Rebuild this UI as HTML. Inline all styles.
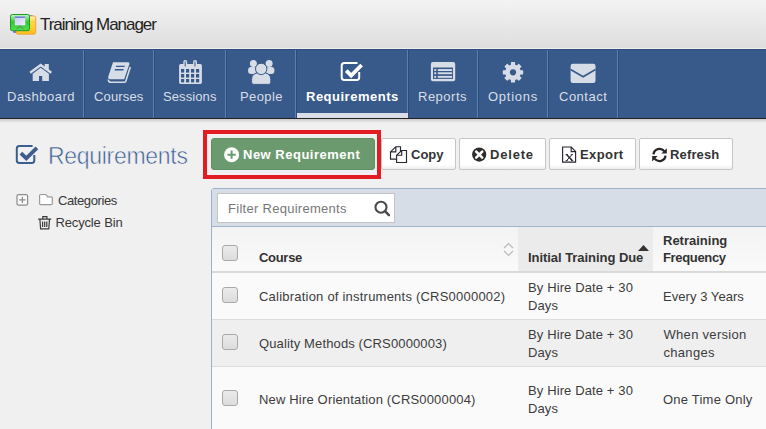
<!DOCTYPE html>
<html><head><meta charset="utf-8">
<style>
*{margin:0;padding:0;box-sizing:border-box}
html,body{width:766px;height:429px;overflow:hidden}
body{font-family:"Liberation Sans",sans-serif;background:#f0f0f0;position:relative;color:#333}
.abs{position:absolute}
#hdr{left:0;top:0;width:766px;height:49px;background:linear-gradient(#f3f3f3,#dedede);border-bottom:1px solid #f0eeec}
#title{left:40px;top:15px;font-size:17px;color:#222;letter-spacing:-1.05px}
#nav{left:0;top:49px;width:766px;height:69px;background:#385a8a;border-top:1px solid #2d4d7d}
#navline{left:0;top:118px;width:766px;height:1px;background:#222}
#shadow{left:0;top:119px;width:766px;height:4px;background:linear-gradient(#cacaca,#f0f0f0)}
.sep{top:50px;width:2px;height:68px;background:linear-gradient(90deg,#5a80b2 50%,#2e4c78 50%)}
.nl{top:89px;font-size:13px;color:#d8dee7;white-space:nowrap}
.ni{fill:#d6dce6}
#active{left:297px;top:113px;width:111px;height:5px;background:#d8dde6}

#ptitle{left:48px;top:142.5px;font-size:23px;color:#3a5c94;-webkit-text-stroke:0.55px #f0f0f0;paint-order:normal;white-space:nowrap;letter-spacing:-0.3px}
#redbox{left:203px;top:130px;width:178px;height:49px;border:4px solid #e31b23}
#newbtn{left:211px;top:138px;width:164px;height:32px;background:#6b9a6e;border:1px solid #5f8f62;border-radius:3px}
.btn{top:138px;height:32px;background:linear-gradient(#fff 86%,#eeeeee);border:1px solid #c6c6c6;border-radius:2px}
.bt{top:147px;font-size:13px;font-weight:bold;color:#333;white-space:nowrap}
.tree{font-size:13px;color:#383838;white-space:nowrap}
#panel{left:211px;top:188px;width:600px;height:260px;border:1px solid #9db2c8;border-radius:3px 0 0 0;background:#fafafa}
#tbar{left:212px;top:189px;width:560px;height:38px;background:#d6dde7;border-bottom:1px solid #9fb4c9}
#filter{left:217px;top:193px;width:178px;height:30px;background:#fff;border:1px solid #c4c4c4}
#ftxt{left:228px;top:201px;font-size:13px;color:#777;white-space:nowrap;letter-spacing:0.28px}
#thead{left:212px;top:227px;width:560px;height:46px;background:linear-gradient(#f3f3f3,#fafafa);border-bottom:2px solid #d9d9d9}
#sortcol{left:518px;top:227px;width:135px;height:44px;background:#ebebeb}
.th{font-size:13px;font-weight:bold;color:#333;white-space:nowrap;line-height:17px;letter-spacing:0.3px}
.td{font-size:13px;color:#3c3c3c;white-space:nowrap;line-height:18px;letter-spacing:0.22px}
.cb{left:222px;width:16px;height:16px;border:1px solid #a9a9a9;border-radius:3px;background:linear-gradient(#ebebeb,#dcdcdc)}
.row{left:212px;width:560px}
</style></head><body>
<div id="hdr" class="abs"></div>
<svg class="abs" style="left:6px;top:10px" width="34" height="28" viewBox="6 10 34 28">
<defs>
<linearGradient id="gy" x1="0" y1="0" x2="0" y2="1"><stop offset="0" stop-color="#fff6c0"/><stop offset="0.3" stop-color="#ffd84a"/><stop offset="1" stop-color="#ffbf1a"/></linearGradient>
<linearGradient id="gg" x1="0" y1="0" x2="0" y2="1"><stop offset="0" stop-color="#c8f8c8"/><stop offset="0.45" stop-color="#34c634"/><stop offset="1" stop-color="#4ee04e"/></linearGradient>
<linearGradient id="gs" x1="0" y1="0" x2="1" y2="1"><stop offset="0" stop-color="#c8c8ff"/><stop offset="1" stop-color="#f0f0ff"/></linearGradient>
</defs>
<rect x="13" y="15" width="20" height="18" rx="1.5" fill="#7474e0"/>
<rect x="16.3" y="16" width="19.4" height="18.2" rx="1.8" fill="url(#gy)" stroke="#f2a43a" stroke-width="1"/>
<rect x="10.5" y="14.5" width="19" height="16.2" rx="1.8" fill="url(#gg)" stroke="#1f9a1f" stroke-width="1"/>
<rect x="14.8" y="16.5" width="10.5" height="8.8" fill="url(#gs)"/>
<rect x="14.8" y="16.5" width="10.5" height="1.4" fill="#6478d8"/>
<path d="M20 25.3v1.2L16.5 28.6M20 26.5l3.5 2.1" fill="none" stroke="#6a7a6a" stroke-width="0.9"/>
</svg>
<div id="title" class="abs">Training Manager</div>
<div id="nav" class="abs"></div>
<div id="navline" class="abs"></div>
<div id="shadow" class="abs"></div>
<div class="abs sep" style="left:83px"></div>
<div class="abs sep" style="left:153px"></div>
<div class="abs sep" style="left:225px"></div>
<div class="abs sep" style="left:295px"></div>
<div class="abs sep" style="left:407px"></div>
<div class="abs sep" style="left:477px"></div>
<div class="abs sep" style="left:547px"></div>
<div class="abs sep" style="left:617px"></div>
<div id="active" class="abs"></div>
<svg class="abs" style="left:0;top:49px" width="766" height="69" viewBox="0 49 766 69">
<g fill="#d7dde7">
 <path d="M30.1 72.8L40.7 65.1L51.3 72.8" fill="none" stroke="#d7dde7" stroke-width="2.4"/>
 <rect x="44.7" y="64" width="4.1" height="5.8"/>
 <path d="M32.7 81V73.8L40.7 67.8L48.9 73.8V81H42.2V76H39V81Z"/>
 <path d="M113 62.2H128.2Q129.8 62.4 129.3 64.2L124.2 79.2H110.2Q107.6 79.2 108.3 76.6Z"/>
 <path d="M130.3 67L125.8 81.2Q125.4 82.3 124.2 82.3H111Q108.3 82.3 108.4 79.6" fill="none" stroke="#d7dde7" stroke-width="1.6"/>
 <rect x="179.1" y="64" width="22.8" height="19.9" rx="1.6"/>
 <rect x="183.3" y="60.1" width="3.9" height="6.7" rx="1.9"/>
 <rect x="193.1" y="60.1" width="3.9" height="6.7" rx="1.9"/>
 <circle cx="253.4" cy="63.6" r="3.5"/>
 <circle cx="269.1" cy="63.6" r="3.5"/>
 <rect x="248.1" y="67.1" width="8.5" height="6.9" rx="3"/>
 <rect x="265.9" y="67.1" width="8.5" height="6.9" rx="3"/>
 <path d="M251.6 82.2V79.2Q251.6 72.4 261.2 72.4Q270.8 72.4 270.8 79.2V82.2Q270.8 84.4 268.6 84.4H253.8Q251.6 84.4 251.6 82.2Z" stroke="#385a8a" stroke-width="1"/>
 <circle cx="261.2" cy="68.9" r="5.7" stroke="#385a8a" stroke-width="1"/>
 <rect x="430.9" y="62" width="24.3" height="19.2" rx="2"/>
 <rect x="570.6" y="63.7" width="24.9" height="19.3" rx="2.2"/>
</g>
<g fill="#385a8a">
 <rect x="116" y="65.7" width="8.8" height="1.3" transform="skewX(-18) translate(21.5 0)"/>
 <rect x="114.8" y="69.1" width="8.8" height="1.3" transform="skewX(-18) translate(22.6 0)"/>
 <rect x="184.7" y="61.5" width="1" height="5"/>
 <rect x="194.5" y="61.5" width="1" height="5"/>
 <rect x="181" y="69" width="3.2" height="3.6"/><rect x="186" y="69" width="3.2" height="3.6"/><rect x="191" y="69" width="3.2" height="3.6"/><rect x="196" y="69" width="3.2" height="3.6"/>
 <rect x="181" y="74" width="3.2" height="3.6"/><rect x="186" y="74" width="3.2" height="3.6"/><rect x="191" y="74" width="3.2" height="3.6"/><rect x="196" y="74" width="3.2" height="3.6"/>
 <rect x="181" y="79" width="3.2" height="3.4"/><rect x="186" y="79" width="3.2" height="3.4"/><rect x="191" y="79" width="3.2" height="3.4"/><rect x="196" y="79" width="3.2" height="3.4"/>
 <rect x="433" y="67.5" width="20" height="11.4"/>
 <path d="M570.6 69.5L583.1 76.8L595.5 69.5" fill="none" stroke="#385a8a" stroke-width="1.6"/>
</g>
<g fill="#d7dde7">
 <rect x="434.2" y="69.1" width="2" height="1.9"/><rect x="437.8" y="69.1" width="14.3" height="1.9"/>
 <rect x="434.2" y="72.3" width="2" height="1.9"/><rect x="437.8" y="72.3" width="14.3" height="1.9"/>
 <rect x="434.2" y="75.9" width="2" height="1.9"/><rect x="437.8" y="75.9" width="14.3" height="1.9"/>
</g>
<g fill="#d7dde7"><rect x="510.9" y="62.099999999999994" width="4.2" height="10.2" rx="0.6" transform="rotate(0 513 72.3)"/><rect x="510.9" y="62.099999999999994" width="4.2" height="10.2" rx="0.6" transform="rotate(45 513 72.3)"/><rect x="510.9" y="62.099999999999994" width="4.2" height="10.2" rx="0.6" transform="rotate(90 513 72.3)"/><rect x="510.9" y="62.099999999999994" width="4.2" height="10.2" rx="0.6" transform="rotate(135 513 72.3)"/><rect x="510.9" y="62.099999999999994" width="4.2" height="10.2" rx="0.6" transform="rotate(180 513 72.3)"/><rect x="510.9" y="62.099999999999994" width="4.2" height="10.2" rx="0.6" transform="rotate(225 513 72.3)"/><rect x="510.9" y="62.099999999999994" width="4.2" height="10.2" rx="0.6" transform="rotate(270 513 72.3)"/><rect x="510.9" y="62.099999999999994" width="4.2" height="10.2" rx="0.6" transform="rotate(315 513 72.3)"/><circle cx="513" cy="72.3" r="7.9"/></g><circle cx="513" cy="72.3" r="3.1" fill="#385a8a"/>
<path d="M357.5 63H344.2Q341.7 63 341.7 65.5V77.6Q341.7 80 344.2 80H356.8Q359.2 80 359.2 77.6V72" fill="none" stroke="#fff" stroke-width="2"/>
<path d="M346.3 70.6L351.2 75.5L361.6 65" fill="none" stroke="#fff" stroke-width="3.8"/>
</svg>

<div class="abs nl" style="left:7px;letter-spacing:0.5px">Dashboard</div>
<div class="abs nl" style="left:94px;letter-spacing:0.15px">Courses</div>
<div class="abs nl" style="left:163px;letter-spacing:0.1px">Sessions</div>
<div class="abs nl" style="left:240px;letter-spacing:0.4px">People</div>
<div class="abs nl" style="left:306px;color:#fff;font-weight:bold;letter-spacing:0.5px">Requirements</div>
<div class="abs nl" style="left:418px;letter-spacing:0.5px">Reports</div>
<div class="abs nl" style="left:488px;letter-spacing:0.75px">Options</div>
<div class="abs nl" style="left:559px;letter-spacing:0.5px">Contact</div>

<svg class="abs" style="left:12px;top:140px" width="30" height="30" viewBox="12 140 30 30"><g transform="translate(-324.9 82.9)">
<path d="M357.5 63H344.2Q341.7 63 341.7 65.5V77.6Q341.7 80 344.2 80H356.8Q359.2 80 359.2 77.6V72" fill="none" stroke="#3b5e8f" stroke-width="2"/>
<path d="M345.8 70.2L351.2 75.5L361.8 65" fill="none" stroke="#3b5e8f" stroke-width="3.8"/></g>
</svg>
<div id="ptitle" class="abs">Requirements</div>
<div id="redbox" class="abs"></div>
<div id="newbtn" class="abs"></div>
<svg class="abs" style="left:215px;top:140px" width="30" height="28" viewBox="215 140 30 28"><circle cx="231.6" cy="154.7" r="7.5" fill="#fff"/><path d="M231.6 150.6v8.2M227.5 154.7h8.2" stroke="#6b9a6e" stroke-width="2"/></svg>
<div class="abs bt" style="left:243px;color:#fff;letter-spacing:0.5px">New Requirement</div>
<div class="abs btn" style="left:381px;width:75px"></div>
<div class="abs btn" style="left:459px;width:87px"></div>
<div class="abs btn" style="left:549px;width:87px"></div>
<div class="abs btn" style="left:639px;width:94px"></div>
<svg class="abs" style="left:385px;top:140px" width="30" height="28" viewBox="385 140 30 28" fill="none" stroke="#262630" stroke-width="1.15">
<path d="M390.5 151.8L395.8 146.7H400.5V152.2M390.5 151.8V159.1H396.6M395.8 146.7V151.8H390.5"/>
<path d="M396.6 155.2L401.7 150.5H406.5V162.5H396.6ZM401.7 150.5V155.2H396.6" fill="#fff"/>
</svg>
<div class="abs bt" style="left:411px">Copy</div>
<svg class="abs" style="left:466px;top:143px" width="24" height="24" viewBox="466 143 24 24"><circle cx="479.2" cy="154.6" r="7.1" fill="#2e2e2e"/><path d="M476.2 151.6l6 6M482.2 151.6l-6 6" stroke="#fff" stroke-width="2.6" stroke-linecap="round"/></svg>
<div class="abs bt" style="left:490px;letter-spacing:0.8px">Delete</div>
<svg class="abs" style="left:555px;top:140px" width="30" height="28" viewBox="555 140 30 28" fill="none" stroke="#262630" stroke-width="1.15">
<path d="M562.6 147H571.2L575.6 151.4V162.1H562.6Z" fill="#fff"/><path d="M571.2 147V151.6H575.6"/>
<path d="M566.6 154.6L572.2 160.6" stroke-width="1.5"/><path d="M572 154.6L566.6 160.6" stroke-width="1"/>
<path d="M565.6 154.6H567.9M570.8 154.6H573M565.6 160.6H567.8M571 160.6H573.2" stroke-width="0.9"/>
</svg>
<div class="abs bt" style="left:580px;letter-spacing:0.4px">Export</div>
<svg class="abs" style="left:645px;top:140px" width="30" height="28" viewBox="645 140 30 28">
<path d="M653.5 154.3A6 6 0 0 1 664.3 151.3" fill="none" stroke="#262626" stroke-width="2.3"/><path d="M666.8 148.2V153.6H661.4z" fill="#262626"/>
<path d="M665.5 155.6A6 6 0 0 1 654.7 158.6" fill="none" stroke="#262626" stroke-width="2.3"/><path d="M652.2 161.6V156.1H657.6z" fill="#262626"/>
</svg>
<div class="abs bt" style="left:670px;letter-spacing:0.15px">Refresh</div>



<svg class="abs" style="left:10px;top:188px" width="50" height="46" viewBox="10 188 50 46" fill="none">
<rect x="17" y="194.7" width="10.6" height="10.4" rx="1.6" fill="#f8f8f8" stroke="#8c8c8c" stroke-width="1.2"/>
<path d="M19.2 199.9H25.5M22.35 196.8V203.1" stroke="#8a8a8a" stroke-width="1.2"/>
<path d="M40.6 194.5H45.2Q46 194.5 46.5 195.2L47.6 196.9H51.2Q52.3 196.9 52.3 198V203.6Q52.3 204.6 51.3 204.6H40.6Q39.6 204.6 39.6 203.6V195.5Q39.6 194.5 40.6 194.5Z" fill="#fff" stroke="#9a9a9a" stroke-width="1.2"/>
<path d="M38.2 219.2H51.2M42.8 219V216.7H46.9V219M39.9 219.3L40.6 228.9H48.8L49.5 219.3M42.6 221.5V227M44.7 221.5V227M46.8 221.5V227" stroke="#3a3a3a" stroke-width="1.2"/>
</svg>
<div class="abs tree" style="left:58px;top:193px;letter-spacing:-0.4px">Categories</div>

<div class="abs tree" style="left:55.5px;top:215px;letter-spacing:-0.15px">Recycle Bin</div>

<div id="panel" class="abs"></div>
<div id="tbar" class="abs"></div>
<div id="filter" class="abs"></div>
<div id="ftxt" class="abs">Filter Requirements</div>
<svg class="abs" style="left:374px;top:199px" width="17" height="18" viewBox="0 0 17 18"><circle cx="7" cy="8.2" r="5.5" fill="none" stroke="#4a4a4a" stroke-width="2.1"/><path d="M11.2 12.4L14.9 16.1" stroke="#4a4a4a" stroke-width="2.5" stroke-linecap="round"/></svg>
<div id="thead" class="abs"></div>
<div id="sortcol" class="abs"></div>
<div class="abs cb" style="top:245px"></div>
<div class="abs th" style="left:259px;top:249px;letter-spacing:-0.3px">Course</div>
<svg class="abs" style="left:503px;top:242px" width="11" height="15" viewBox="0 0 11 15"><path d="M1 6l4.5-4.5L10 6M1 9l4.5 4.5L10 9" fill="none" stroke="#bbb" stroke-width="1.2"/></svg>
<div class="abs th" style="left:528px;top:249px;letter-spacing:-0.05px">Initial Training Due</div>
<svg class="abs" style="left:638px;top:245px" width="11" height="6" viewBox="0 0 11 6"><path d="M0 6L5.5 0 11 6z" fill="#333"/></svg>
<div class="abs th" style="left:663px;top:232px;letter-spacing:0">Retraining</div><div class="abs th" style="left:663px;top:249px;letter-spacing:-0.33px">Frequency</div>

<div class="abs row" style="top:273px;height:47px;background:#fafafa;border-bottom:1px solid #dcdcdc"></div>
<div class="abs row" style="top:320px;height:47px;background:#efefef;border-bottom:1px solid #dcdcdc"></div>
<div class="abs row" style="top:367px;height:70px;background:#fafafa"></div>
<div class="abs cb" style="top:287px"></div>
<div class="abs cb" style="top:334px"></div>
<div class="abs cb" style="top:390px"></div>
<div class="abs td" style="left:259px;top:288px">Calibration of instruments (CRS0000002)</div>
<div class="abs td" style="left:528px;top:279px;letter-spacing:0.12px">By Hire Date + 30<br>Days</div>
<div class="abs td" style="left:663px;top:288px;letter-spacing:0.05px">Every 3 Years</div>
<div class="abs td" style="left:259px;top:335px;letter-spacing:0.13px">Quality Methods (CRS0000003)</div>
<div class="abs td" style="left:528px;top:326px;letter-spacing:0.12px">By Hire Date + 30<br>Days</div>
<div class="abs td" style="left:663.5px;top:326px;letter-spacing:0.3px">When version<br>changes</div>
<div class="abs td" style="left:259px;top:391px;letter-spacing:0.17px">New Hire Orientation (CRS0000004)</div>
<div class="abs td" style="left:528px;top:382px;letter-spacing:0.12px">By Hire Date + 30<br>Days</div>
<div class="abs td" style="left:663px;top:391px">One Time Only</div>
</body></html>
